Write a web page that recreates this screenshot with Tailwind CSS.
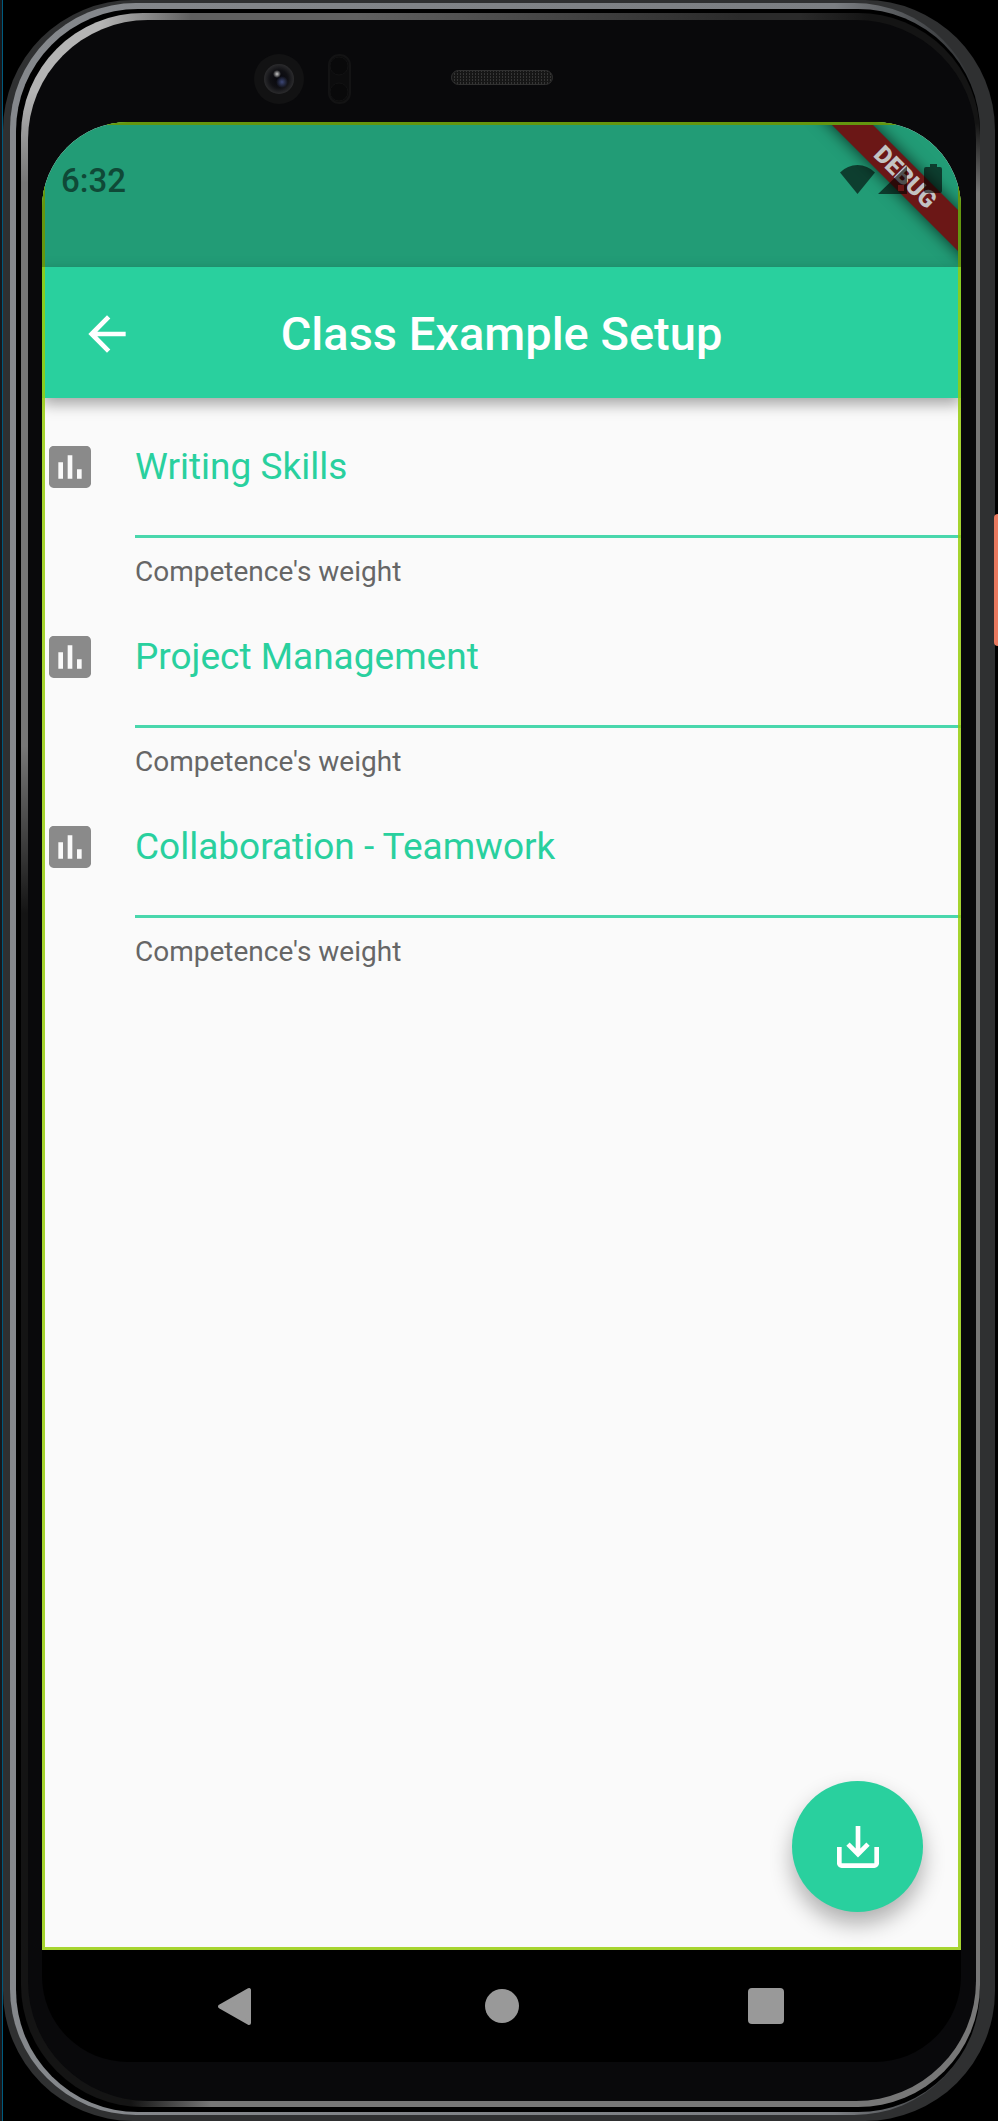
<!DOCTYPE html>
<html lang="en">
<head>
<meta charset="utf-8">
<meta name="viewport" content="width=device-width, initial-scale=1">
<title>Class Example Setup</title>
<script src="https://cdn.jsdelivr.net/npm/@tailwindcss/browser@4"></script>
</head>
<body class="bg-black font-['Roboto',sans-serif]">
<div class="relative flex min-h-screen border-l-2 border-[#16181c] pr-[3px] before:w-px before:bg-[#005a7d] before:content-['']">
  <!-- Side buttons of the handset -->
  <div class="absolute right-0 top-[514px] h-[132px] w-[4px] rounded-l-sm bg-[#e9795f]"></div>

  <!-- Metal frame, one ring per layer -->
  <div class="flex flex-1 rounded-[130px] bg-[#2f3031] pb-[6px] pl-[7px] pr-[15px] pt-[3px]">
   <div class="flex flex-1 rounded-[126px] bg-linear-to-r from-[#85888c] via-[#7b7e82] via-85% to-[#2c2e30] pb-[3px] pl-[6px] pt-[6px]">
    <div class="flex flex-1 rounded-[122px] bg-black pb-[5px] pl-[5px] pt-[4px]">
     <div class="flex flex-1 rounded-[122px] pb-[6px] pl-[7px] pr-[4px] pt-[7px] [background:radial-gradient(circle_at_top_right,#141414_110px,transparent_180px),radial-gradient(circle_at_top_left,#b4b4b4_80px,transparent_170px),radial-gradient(circle_at_bottom_left,#141414_110px,transparent_190px),linear-gradient(to_bottom,transparent_35%,#141414_43%)_0_0/16px_100%_no-repeat,linear-gradient(to_right,#606060_35%,#2a2a2a_75%)_0_0/100%_24px_no-repeat,#777777]">
      <div class="flex flex-1 flex-col rounded-[120px] bg-[#09090b] pb-[39px] pl-[14px] pr-[15px]">

        <!-- Camera, sensors and speaker -->
        <div class="relative h-[102px] shrink-0">
          <svg class="absolute left-[212px] top-[34px] h-[50px] w-[104px]" viewBox="0 0 104 50" aria-hidden="true">
            <defs>
              <radialGradient id="lens"><stop offset="0" stop-color="#06060c"/><stop offset=".6" stop-color="#101014"/><stop offset="1" stop-color="#2b2b2d"/></radialGradient>
              <radialGradient id="glow"><stop offset="0" stop-color="#3d4877"/><stop offset="1" stop-color="#3d4877" stop-opacity="0"/></radialGradient>
              <radialGradient id="spark"><stop offset="0" stop-color="#c9c9c9"/><stop offset="1" stop-color="#c9c9c9" stop-opacity="0"/></radialGradient>
            </defs>
            <circle cx="25" cy="25" r="25" fill="#121213"/>
            <circle cx="25" cy="25" r="15" fill="url(#lens)"/>
            <circle cx="28" cy="28" r="6" fill="url(#glow)"/>
            <circle cx="23" cy="20" r="4" fill="url(#spark)"/>
            <rect x="75" y="1" width="21" height="48" rx="10" fill="#0c0c0d" stroke="#131314" stroke-width="2"/>
            <circle cx="85" cy="12" r="9" fill="#09090a" stroke="#121213"/>
            <circle cx="85" cy="38" r="9" fill="#09090a" stroke="#121213"/>
          </svg>
          <svg class="absolute left-1/2 top-[50px] h-[15px] w-[102px] -translate-x-1/2" viewBox="0 0 102 15" aria-hidden="true">
            <defs><pattern id="mesh" width="3" height="3" patternUnits="userSpaceOnUse"><rect width="3" height="3" fill="#161616"/><rect width="1" height="2" fill="#353535"/></pattern></defs>
            <rect x=".5" y=".5" width="101" height="14" rx="7" fill="url(#mesh)" stroke="#303030"/>
          </svg>
        </div>

        <!-- Screen -->
        <div class="flex flex-1 flex-col overflow-hidden rounded-[86px] bg-black">
          <div class="relative flex flex-1 flex-col bg-[#fafafa]">
            <div class="relative flex h-[145px] shrink-0 items-start justify-between overflow-hidden bg-[#229c76] pl-[19px] pr-[18px] pt-[39px]">
              <span class="text-[33px] leading-[40px] font-medium text-[#0f4937]">6:32</span>
              <div class="absolute right-[-54px] top-[41px] h-[29px] w-[220px] rotate-45 bg-[#6b1716] text-center text-[24px] leading-[29px] font-black text-[#c3c3c3] shadow-[0_0_16px_rgba(0,0,0,.7)]">DEBUG</div>
              <svg class="relative mt-[3px] h-[30px] w-[104px]" viewBox="0 0 104 30" fill="#000" fill-opacity=".6" aria-label="Wi-Fi, mobile signal, battery" role="img">
                <path d="M1 8.500Q8.500 1 18.500 1T36 8.500L18.500 30Z"/>
                <path fill-rule="evenodd" d="M39 30L68 2V30ZM59 21H65V27H59Z"/>
                <path d="M91 0H98V3H101Q103 3 103 5V27Q103 29 101 29H87Q85 29 85 27V5Q85 3 87 3H91Z"/>
              </svg>
            </div>

            <header class="relative flex h-[131px] shrink-0 items-center bg-[#29d09e] px-[37px] pt-[2px] shadow-[0_6px_14px_rgba(0,0,0,.35)]">
              <button type="button" aria-label="Back" class="size-[56px]">
                <svg viewBox="0 0 24 24" fill="#fff" class="size-full"><path d="M20 11H7.830l5.590-5.590L12 4l-8 8 8 8 1.410-1.410L7.830 13H20v-2z"/></svg>
              </button>
              <h1 class="flex-1 pr-[56px] text-center text-[47px] leading-[56px] font-medium text-white">Class Example Setup</h1>
            </header>

            <main class="flex flex-1 flex-col">
              <form class="flex flex-col gap-[41px] pt-[41px]">
                <div class="flex items-start gap-[37px]">
                  <svg viewBox="0 0 24 24" fill="#8a8a8a" class="size-[56px] shrink-0" aria-hidden="true"><path d="M19 3H5c-1.100 0-2 .9-2 2v14c0 1.100.9 2 2 2h14c1.100 0 2-.9 2-2V5c0-1.100-.9-2-2-2zM9 17H7v-7h2v7zm4 0h-2V7h2v10zm4 0h-2v-4h2v4z"/></svg>
                  <div class="flex min-w-0 flex-1 flex-col">
                    <label for="writing" class="text-[37px] leading-[56px] text-[#29d09e]">Writing Skills</label>
                    <input id="writing" type="text" aria-describedby="writing-help" class="h-[43px] w-full border-b-[3px] border-[#29d09e]/85 bg-transparent text-[28px] outline-none">
                    <p id="writing-help" class="mt-[18px] text-[28px] leading-[32px] text-[#666666]">Competence's weight</p>
                  </div>
                </div>
                <div class="flex items-start gap-[37px]">
                  <svg viewBox="0 0 24 24" fill="#8a8a8a" class="size-[56px] shrink-0" aria-hidden="true"><path d="M19 3H5c-1.100 0-2 .9-2 2v14c0 1.100.9 2 2 2h14c1.100 0 2-.9 2-2V5c0-1.100-.9-2-2-2zM9 17H7v-7h2v7zm4 0h-2V7h2v10zm4 0h-2v-4h2v4z"/></svg>
                  <div class="flex min-w-0 flex-1 flex-col">
                    <label for="project" class="text-[37px] leading-[56px] text-[#29d09e]">Project Management</label>
                    <input id="project" type="text" aria-describedby="project-help" class="h-[43px] w-full border-b-[3px] border-[#29d09e]/85 bg-transparent text-[28px] outline-none">
                    <p id="project-help" class="mt-[18px] text-[28px] leading-[32px] text-[#666666]">Competence's weight</p>
                  </div>
                </div>
                <div class="flex items-start gap-[37px]">
                  <svg viewBox="0 0 24 24" fill="#8a8a8a" class="size-[56px] shrink-0" aria-hidden="true"><path d="M19 3H5c-1.100 0-2 .9-2 2v14c0 1.100.9 2 2 2h14c1.100 0 2-.9 2-2V5c0-1.100-.9-2-2-2zM9 17H7v-7h2v7zm4 0h-2V7h2v10zm4 0h-2v-4h2v4z"/></svg>
                  <div class="flex min-w-0 flex-1 flex-col">
                    <label for="teamwork" class="text-[37px] leading-[56px] text-[#29d09e]">Collaboration - Teamwork</label>
                    <input id="teamwork" type="text" aria-describedby="teamwork-help" class="h-[43px] w-full border-b-[3px] border-[#29d09e]/85 bg-transparent text-[28px] outline-none">
                    <p id="teamwork-help" class="mt-[18px] text-[28px] leading-[32px] text-[#666666]">Competence's weight</p>
                  </div>
                </div>
              </form>
              <button type="button" aria-label="Save" class="mb-[38px] mr-[38px] mt-auto flex size-[131px] items-center justify-center self-end rounded-full bg-[#29d09e] shadow-[0_12px_22px_rgba(0,0,0,.3)]">
                <svg viewBox="0 0 24 24" fill="#fff" class="size-[56px]"><path d="M19 12v7H5v-7H3v7c0 1.100.9 2 2 2h14c1.100 0 2-.9 2-2v-7h-2zm-6 .670l2.590-2.580L17 11.500l-5 5-5-5 1.410-1.410L11 12.670V3h2z"/></svg>
              </button>
            </main>

            <!-- Selection outline over the running app -->
            <div class="pointer-events-none absolute inset-0 border-[3px] border-[#96cd0a]/85"></div>
            <div class="pointer-events-none absolute inset-x-0 top-0 h-[145px] border-x-[3px] border-t-[3px] border-[#64960f]"></div>
          </div>

          <nav aria-label="System" class="grid h-[112px] shrink-0 grid-cols-[1fr_auto_1fr] items-center">
            <button type="button" aria-label="Back" class="ml-[175px] justify-self-start">
              <svg class="h-[39px] w-[36px]" viewBox="0 0 36 39" fill="#999" stroke="#999" stroke-width="4" stroke-linejoin="round"><path d="M3 19.500L32 3V36Z"/></svg>
            </button>
            <button type="button" aria-label="Home" class="size-[34px] rounded-full bg-[#999999]"></button>
            <button type="button" aria-label="Recent apps" class="mr-[177px] size-[36px] justify-self-end rounded bg-[#999999]"></button>
          </nav>
        </div>
      </div>
     </div>
    </div>
   </div>
  </div>
</div>
</body>
</html>
